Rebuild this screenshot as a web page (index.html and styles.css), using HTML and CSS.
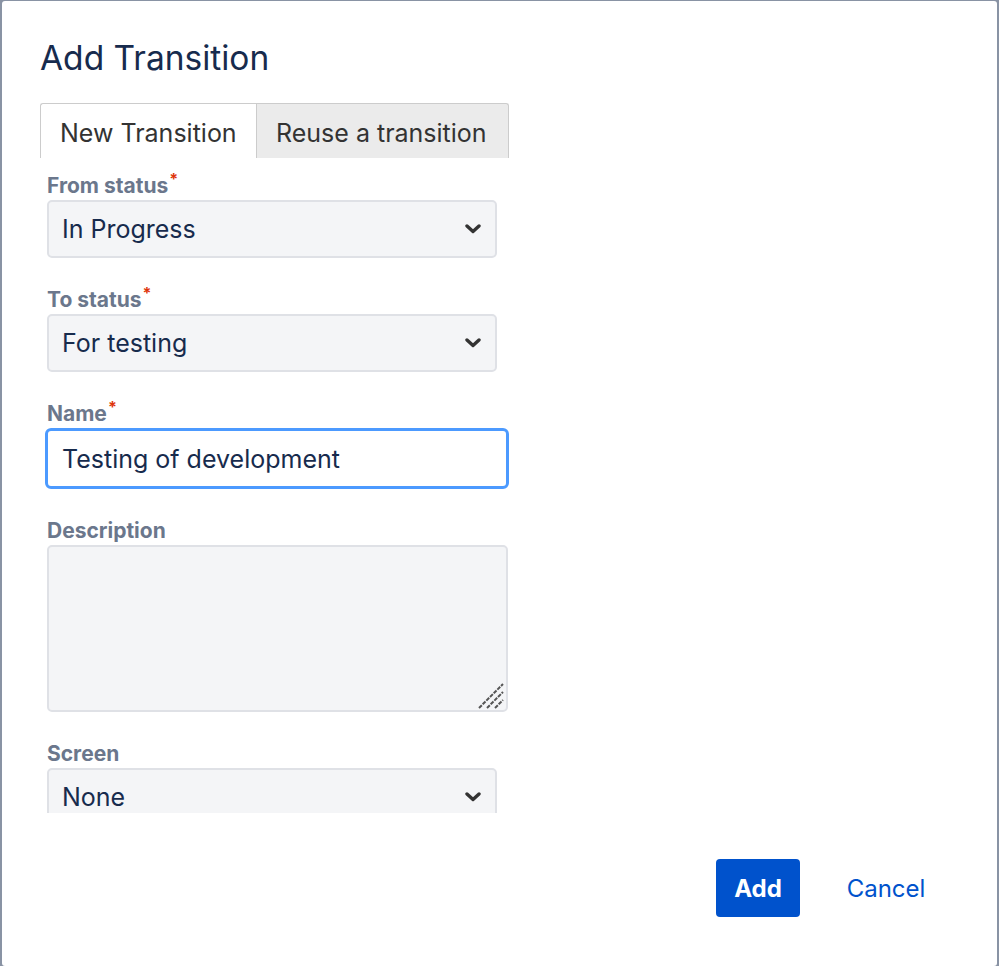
FILE: index.html
```html
<!DOCTYPE html>
<html lang="en">
<head>
  <meta charset="UTF-8">
  <meta name="viewport" content="width=device-width, initial-scale=1.0">
  <title>Add Transition</title>
  <link rel="stylesheet" href="styles.css">
</head>
<body>
  <div class="dialog">
    <h2 class="dialog-title">Add Transition</h2>

    <div class="tabs">
      <div class="tab active">New Transition</div>
      <div class="tab">Reuse a transition</div>
    </div>

    <div class="dialog-body">
      <div class="field">
        <label class="label">From status<span class="req">*</span></label>
        <div class="select">
          <span>In Progress</span>
          <svg class="chevron" width="16" height="10" viewBox="0 0 16 10"><path d="M2 2 L8 7.5 L14 2" fill="none" stroke="#333" stroke-width="3.4" stroke-linecap="round" stroke-linejoin="round"/></svg>
        </div>
      </div>

      <div class="field">
        <label class="label">To status<span class="req">*</span></label>
        <div class="select">
          <span>For testing</span>
          <svg class="chevron" width="16" height="10" viewBox="0 0 16 10"><path d="M2 2 L8 7.5 L14 2" fill="none" stroke="#333" stroke-width="3.4" stroke-linecap="round" stroke-linejoin="round"/></svg>
        </div>
      </div>

      <div class="field">
        <label class="label">Name<span class="req">*</span></label>
        <input class="text-input" type="text" value="Testing of development">
      </div>

      <div class="field">
        <label class="label">Description</label>
        <div class="textarea-wrap">
          <textarea class="textarea"></textarea>
          <svg class="grip" width="26" height="26" viewBox="0 0 26 26">
            <path d="M1 25 L25 1 M9 25 L25 9 M17 25 L25 17" stroke="#555" stroke-width="2" stroke-dasharray="4 1.2"/>
          </svg>
        </div>
      </div>

      <div class="field">
        <label class="label">Screen</label>
        <div class="select">
          <span>None</span>
          <svg class="chevron" width="16" height="10" viewBox="0 0 16 10"><path d="M2 2 L8 7.5 L14 2" fill="none" stroke="#333" stroke-width="3.4" stroke-linecap="round" stroke-linejoin="round"/></svg>
        </div>
      </div>
    </div>

    <div class="dialog-footer">
      <button class="btn primary">Add</button>
      <button class="btn link">Cancel</button>
    </div>
  </div>
</body>
</html>
```

FILE: styles.css
```css
body, html {
  margin: 0;
  padding: 0;
  height: 100%;
  overflow: hidden;
}

body {
  background: #8993a4;
  font-family: Inter, "Liberation Sans", sans-serif;
  color: #172b4d;
}

.dialog {
  box-sizing: border-box;
  width: 995px;
  height: 965px;
  margin: 1px 0 0 2px;
  background: #fff;
  border-radius: 3px;
  padding: 37px 0 0 38px;
}

.dialog-title {
  margin: 0;
  font-size: 33.5px;
  line-height: 40px;
  font-weight: 400;
  color: #172b4d;
}

.tabs {
  display: flex;
  margin-top: 25px;
}

.tab {
  box-sizing: border-box;
  height: 55px;
  padding: 14px 19px 0 19px;
  font-size: 25px;
  line-height: 30px;
  color: #333;
  border: 1px solid #ccc;
  border-bottom: none;
  background: #ebebeb;
}

.tab.active {
  background: #fff;
  border-right: none;
  border-radius: 3px 0 0 0;
  width: 216px;
}

.tab:last-child {
  border-radius: 0 3px 0 0;
  width: 253px;
}

.dialog-body {
  height: 655px;
  overflow: hidden;
  padding: 16px 0 0 7px;
  box-sizing: border-box;
}

.field {
  margin-bottom: 30px;
}

.label {
  display: block;
  font-size: 21px;
  line-height: 24px;
  font-weight: 700;
  color: #6b778c;
  margin-bottom: 2px;
}

.req {
  color: #de350b;
  font-size: 16px;
  line-height: 0;
  vertical-align: 8px;
  margin-left: 1px;
}

.select {
  box-sizing: border-box;
  width: 450px;
  height: 58px;
  display: flex;
  align-items: center;
  justify-content: space-between;
  padding: 0 14px 0 13px;
  background: #f4f5f7;
  border: 2px solid #dfe1e6;
  border-radius: 5px;
  font-size: 25px;
  color: #172b4d;
}

.text-input {
  box-sizing: border-box;
  display: block;
  width: 464px;
  height: 61px;
  margin-left: -2px;
  padding: 0 14px;
  border: 3px solid #4c9aff;
  border-radius: 6px;
  background: #fff;
  font-family: Inter, "Liberation Sans", sans-serif;
  font-size: 25px;
  color: #172b4d;
  outline: none;
}

.textarea-wrap {
  position: relative;
  width: 461px;
  height: 167px;
}

.textarea {
  box-sizing: border-box;
  display: block;
  width: 100%;
  height: 100%;
  background: #f4f5f7;
  border: 2px solid #dfe1e6;
  border-radius: 5px;
  resize: none;
  outline: none;
}

.grip {
  position: absolute;
  right: 4px;
  bottom: 3px;
}

.dialog-footer {
  display: flex;
  justify-content: flex-end;
  padding: 46px 51px 0 0;
}

.btn {
  height: 58px;
  border: none;
  border-radius: 4px;
  font-family: Inter, "Liberation Sans", sans-serif;
  font-size: 24px;
  cursor: pointer;
}

.btn.primary {
  width: 84px;
  background: #0052cc;
  color: #fff;
  font-weight: 700;
}

.btn.link {
  background: none;
  color: #0052cc;
  padding: 0 20px;
  margin-left: 26px;
  width: 120px;
}
```
